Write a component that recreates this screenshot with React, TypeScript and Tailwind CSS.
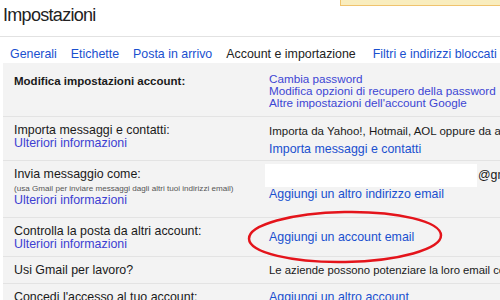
import React from "react";

const tabs = [
  { label: "Generali", active: false },
  { label: "Etichette", active: false },
  { label: "Posta in arrivo", active: false },
  { label: "Account e importazione", active: true },
  { label: "Filtri e indirizzi bloccati", active: false },
];

function Row({ left, right, className }: { left: React.ReactNode; right: React.ReactNode; className: string }) {
  return (
    <div className={`flex border-b border-[#e3e3e3] ${className}`}>
      <div className="w-[259px] shrink-0 pl-[11px]">{left}</div>
      <div className="flex-1 min-w-0">{right}</div>
    </div>
  );
}

const Info = () => <div className="text-[#3d3fd2] leading-[13px]">Ulteriori informazioni</div>;

export default function App() {
  return (
    <div className="relative w-[500px] h-[300px] overflow-hidden bg-white text-[#1a1a1a] text-[12.4px] whitespace-nowrap font-['Liberation_Sans',Arial,sans-serif]">
      {/* notifica in alto */}
      <div className="absolute top-0 left-[340px] w-[200px] h-[6px] bg-[#f9edbe] border-l border-b border-[#f0c36d]" />

      <div className="h-[37px] border-b border-[#e2e2e2] pl-[3px] pt-[4px]">
        <h1 className="text-[18px] leading-[22px] tracking-[-0.7px] text-[#222]">Impostazioni</h1>
      </div>

      <div className="mt-[8px] ml-[3px] flex h-[18px]">
        {tabs.map((t, i) => (
          <div
            key={t.label}
            className={`leading-[18px] ${t.active ? "bg-white text-[#222] pl-[7px] pr-[9px]" : "px-[7px] text-[#1a50cf]"} ${i === 4 ? "ml-[1px]" : ""}`}
          >
            {t.label}
          </div>
        ))}
      </div>

      <div className="ml-[3px] bg-[#f3f3f3] h-[300px]">
        <Row
          className="h-[54px] pt-[11px]"
          left={<div className="font-bold text-[11.5px] leading-[14px]">Modifica impostazioni account:</div>}
          right={
            <div className="pl-[7px] -mt-[1px] text-[11.7px] leading-[12px] text-[#3d46d4]">
              <div>Cambia password</div>
              <div>Modifica opzioni di recupero della password</div>
              <div>Altre impostazioni dell'account Google</div>
            </div>
          }
        />
        <Row
          className="h-[44px] pt-[7px]"
          left={
            <div className="leading-[13px]">
              <div>Importa messaggi e contatti:</div>
              <Info />
            </div>
          }
          right={
            <div className="pl-[7px] leading-[15px]">
              <div className="text-[11.5px]">Importa da Yahoo!, Hotmail, AOL oppure da altri account webmail o POP3.</div>
              <div className="mt-[3px] text-[#1a50cf]">Importa messaggi e contatti</div>
            </div>
          }
        />
        <Row
          className="h-[57px] pt-[7px]"
          left={
            <div className="leading-[13px]">
              <div>Invia messaggio come:</div>
              <div className="mt-[2px] text-[8.1px] leading-[11px] text-[#555]">
                (usa Gmail per inviare messaggi dagli altri tuoi indirizzi email)
              </div>
              <Info />
            </div>
          }
          right={
            <div className="-mt-[4px]">
              <div className="flex items-center">
                <div className="ml-[3px] w-[212px] h-[23px] shrink-0 bg-white" />
                <span className="ml-[1px] text-[12.4px]">@gmail.com</span>
              </div>
              <div className="pl-[7px] leading-[15px] text-[#1a50cf]">Aggiungi un altro indirizzo email</div>
            </div>
          }
        />
        <Row
          className="h-[39px] pt-[7px]"
          left={
            <div className="leading-[13px]">
              <div>Controlla la posta da altri account:</div>
              <Info />
            </div>
          }
          right={<div className="pl-[7px] pt-[5px] leading-[15px] text-[#1a50cf]">Aggiungi un account email</div>}
        />
        <Row
          className="h-[27px] pt-[7px]"
          left={<div className="leading-[13px]">Usi Gmail per lavoro?</div>}
          right={
            <div className="pl-[7px] -mt-[1px] leading-[15px] text-[11.3px]">
              Le aziende possono potenziare la loro email con Google Apps for Work.
            </div>
          }
        />
        <Row
          className="h-[30px] pt-[7px]"
          left={<div className="leading-[13px]">Concedi l'accesso al tuo account:</div>}
          right={<div className="pl-[7px] -mt-[1px] leading-[15px] text-[#1a50cf]">Aggiungi un altro account</div>}
        />
      </div>

      {/* cerchio rosso di evidenziazione */}
      <svg className="absolute left-[240px] top-[206px]" width="215" height="62" viewBox="0 0 215 62">
        <ellipse cx="105" cy="31" rx="96" ry="25" fill="none" stroke="#e4141b" strokeWidth="2.5" transform="rotate(-1 105 31)" />
      </svg>
    </div>
  );
}
